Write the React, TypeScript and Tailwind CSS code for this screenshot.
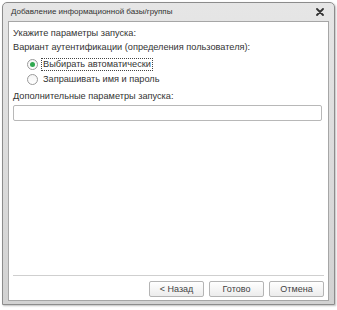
import React from "react";

function Radio({ checked }: { checked: boolean }) {
  return (
    <span className="relative flex h-[11px] w-[11px] items-center justify-center rounded-full border border-[#9a9a9a] bg-gradient-to-b from-[#f4f4f4] to-white">
      {checked && <span className="h-[5px] w-[5px] rounded-full bg-[#2fa84f]" />}
    </span>
  );
}

function Btn({ children }: { children: React.ReactNode }) {
  return (
    <button className="flex h-[16px] w-[55px] items-center justify-center rounded-[2px] border border-[#b4b4b4] bg-gradient-to-b from-white to-[#ececec] text-[9px] leading-none text-[#444]">
      {children}
    </button>
  );
}

export default function App() {
  return (
    <div
      className="h-[310px] w-[337px] bg-white pl-[2px] pt-[2px]"
      style={{ fontFamily: '"Liberation Sans", Arial, sans-serif' }}
    >
      <div className="flex h-[303px] w-[333px] flex-col rounded-t-[5px] border border-[#8c8c8c] bg-gradient-to-b from-[#e6e6e6] to-[#d2d2d2] px-[5px] pb-[3px] shadow-[1px_1px_2px_rgba(0,0,0,0.25)]">
        <div className="flex h-[18px] shrink-0 items-center justify-between pl-[3px] pr-[5px]">
          <span className="text-[8px] text-[#333]">Добавление информационной базы/группы</span>
          <svg width="8" height="8" viewBox="0 0 8 8">
            <path d="M1 1 L7 7 M7 1 L1 7" stroke="#333" strokeWidth="1.8" strokeLinecap="round" />
          </svg>
        </div>
        <div className="flex flex-1 flex-col border border-[#a6a6a6] bg-white px-[4px] pb-[3px] pt-[5px] text-[9.2px] text-[#333]">
          <div className="flex h-[14px] items-center">Укажите параметры запуска:</div>
          <div className="flex h-[14px] items-center">Вариант аутентификации (определения пользователя):</div>
          <div className="mt-[2px] flex h-[15px] items-center pl-[14px]">
            <Radio checked />
            <span className="ml-[3px] flex h-[13px] items-center border border-dotted border-[#444] px-[1px]">
              Выбирать автоматически
            </span>
          </div>
          <div className="flex h-[15px] items-center pl-[14px]">
            <Radio checked={false} />
            <span className="ml-[4px] px-[1px]">Запрашивать имя и пароль</span>
          </div>
          <div className="mt-[3px] flex h-[14px] items-center">Дополнительные параметры запуска:</div>
          <div className="mt-[1px] h-[16px] w-[309px] rounded-[2px] border border-[#b8b8b8] bg-white" />
          <div className="flex-1" />
          <div className="h-[2px] border-t border-[#cfcfcf] border-b-[#f4f4f4]" />
          <div className="mt-[4px] flex justify-end gap-[5px]">
            <Btn>&lt; Назад</Btn>
            <Btn>Готово</Btn>
            <Btn>Отмена</Btn>
          </div>
        </div>
      </div>
    </div>
  );
}
